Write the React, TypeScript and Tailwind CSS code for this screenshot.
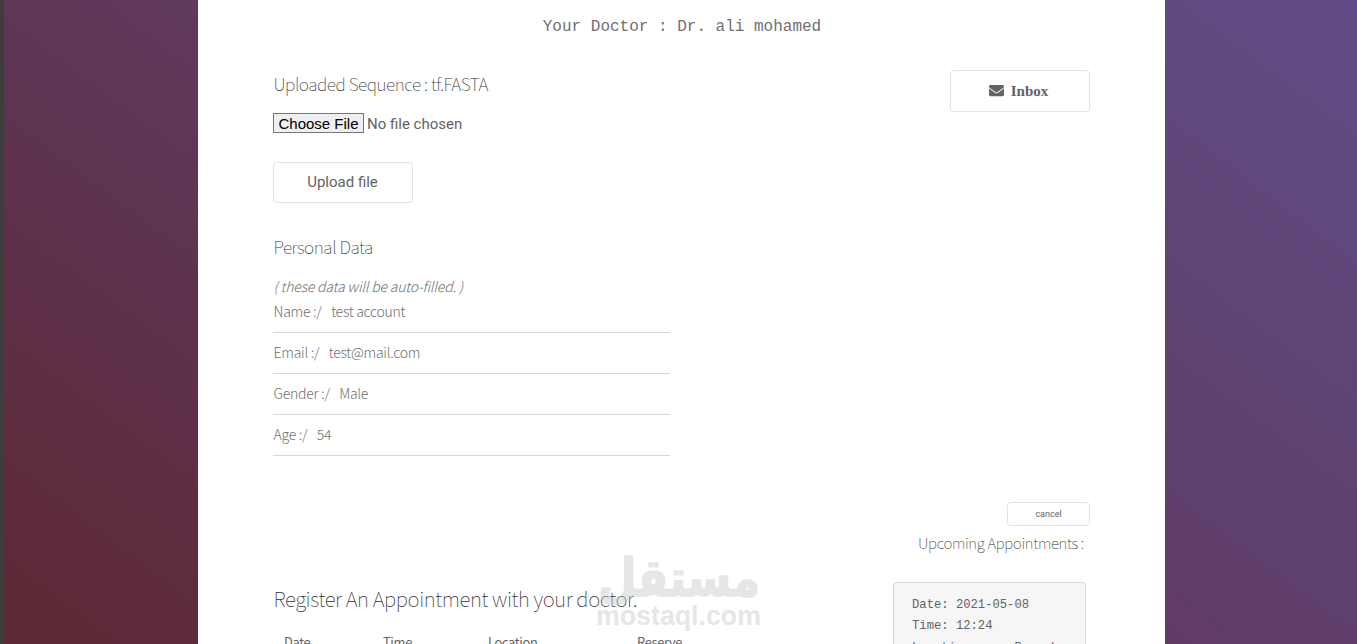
import React from 'react';
import { FaEnvelope } from 'react-icons/fa';

const personalData = [
  { label: 'Name', value: 'test account' },
  { label: 'Email', value: 'test@mail.com' },
  { label: 'Gender', value: 'Male' },
  { label: 'Age', value: '54' },
];

const Watermark: React.FC = () => (
  <div className="pointer-events-none absolute left-[595px] top-[546px] h-[90px] w-[167px] text-[#c8c8c8] opacity-45">
    <svg viewBox="0 0 167 90" className="h-full w-full" fill="currentColor" stroke="currentColor" strokeLinejoin="round">
      <text
        x="3"
        y="50"
        textLength="162"
        lengthAdjust="spacingAndGlyphs"
        direction="rtl"
        textAnchor="end"
        strokeWidth="1.6"
        className="font-['DejaVu_Sans',sans-serif] text-[52px] font-bold"
      >
        مستقل
      </text>
      <text
        x="1"
        y="79"
        textLength="165"
        lengthAdjust="spacingAndGlyphs"
        strokeWidth="0"
        className="font-['Liberation_Sans',sans-serif] text-[27px] font-bold"
      >
        mostaql.com
      </text>
    </svg>
  </div>
);

const App: React.FC = () => {
  return (
    <div className="relative flex h-[644px] w-full overflow-hidden bg-[linear-gradient(37deg,#5d2834_0%,#5f3656_39%,#603c66_54%,#5f4a80_91%,#5f4a86_100%)] font-['Noto_Sans_CJK_SC',sans-serif] font-light text-[#636363]">
      <div className="w-1 shrink-0 bg-[#3d3d3d]" />

      <main className="ml-[194px] w-[967px] shrink-0 bg-white px-[75px] pt-[15px]">
        <h1 className="pl-px text-center font-['Liberation_Mono',monospace] text-[16px] leading-6 font-normal text-[#707070]">
          Your Doctor : Dr. ali mohamed
        </h1>

        <section className="mt-[31px] flex items-start justify-between">
          <div>
            <h2 className="-mt-px pl-[0.5px] text-[17.3px] leading-[30px] font-thin tracking-[-0.45px] text-[#303030]">
              Uploaded Sequence : tf.FASTA
            </h2>
            <div className="mt-[14px] flex h-5 items-center font-['Roboto',sans-serif] text-[15px] font-normal">
              <button className="h-5 w-[91px] border border-[#767676] bg-[#efefef] pt-px text-center font-['Liberation_Sans',sans-serif] text-[15px] leading-[17px] text-black">
                Choose File
              </button>
              <span className="ml-[3px] pt-[2px]">No file chosen</span>
            </div>
            <button className="mt-[29px] h-[41px] w-[140px] rounded border border-[#e3e3e3] pr-px font-['Roboto',sans-serif] text-[15px] font-normal">
              Upload file
            </button>
          </div>
          <button className="flex h-[42px] w-[140px] items-center justify-center gap-[7px] rounded border border-[#e3e3e3] pr-[3px] font-['Liberation_Serif',serif] text-[15px] font-bold">
            <FaEnvelope className="-mt-[2px] size-[15px]" />
            Inbox
          </button>
        </section>

        <section className="mt-[29px] w-[397px]">
          <h2 className="pl-[0.5px] text-[17.3px] leading-[30px] font-thin tracking-[-0.45px] text-[#303030]">
            Personal Data
          </h2>
          <p className="mt-3 pl-[0.5px] text-[14px] leading-[25px] tracking-[-0.2px] text-[#707070] italic">
            ( these data will be auto-filled. )
          </p>
          <ul className="text-[#707070]">
            {personalData.map(({ label, value }, i) => (
              <li key={label} className={i === 0 ? 'h-[34px] border-b border-[#d8d8d8]' : 'h-[41px] border-b border-[#d8d8d8] pt-[7px]'}>
                <p className="flex gap-[9.5px] pl-[0.5px] text-[14px] leading-[25px] tracking-[-0.25px]">
                  <span>{label} :/</span>
                  <span>{value}</span>
                </p>
              </li>
            ))}
          </ul>
        </section>

        <section className="mt-[46px] flex items-start justify-between">
          <div className="pt-[78px]">
            <h2 className="pl-[0.5px] text-[20.5px] leading-9 font-thin tracking-[-0.4px] whitespace-nowrap text-[#303030]">
              Register An Appointment with your doctor.
            </h2>
            <div className="mt-[14px] flex pl-[11px] text-[12.8px] leading-6 font-normal tracking-[-0.3px]">
              <span className="w-[99px]">Date</span>
              <span className="w-[105px]">Time</span>
              <span className="w-[149px]">Location</span>
              <span>Reserve</span>
            </div>
          </div>
          <div className="flex w-[197px] flex-col items-end">
            <button className="h-6 w-[83px] rounded border border-[#e3e3e3] pt-px font-['Roboto',sans-serif] text-[9px] font-normal">
              cancel
            </button>
            <h3 className="mt-[3px] pr-[6px] text-[15px] leading-7 font-thin tracking-[-0.3px] whitespace-nowrap text-[#303030]">
              Upcoming Appointments :
            </h3>
            <div className="mt-[25px] mr-1 h-[90px] w-[193px] rounded border border-[#d8d8d8] bg-[#f6f6f6] px-[18px] pt-3 font-['Liberation_Mono',monospace] text-[12.2px] leading-[21px] font-normal">
              <p>Date: 2021-05-08</p>
              <p>Time: 12:24</p>
              <p className="mt-px whitespace-nowrap">Location:&nbsp;&nbsp;&nbsp;&nbsp;&nbsp;Branch</p>
            </div>
          </div>
        </section>
      </main>

      <Watermark />
    </div>
  );
};

export default App;
